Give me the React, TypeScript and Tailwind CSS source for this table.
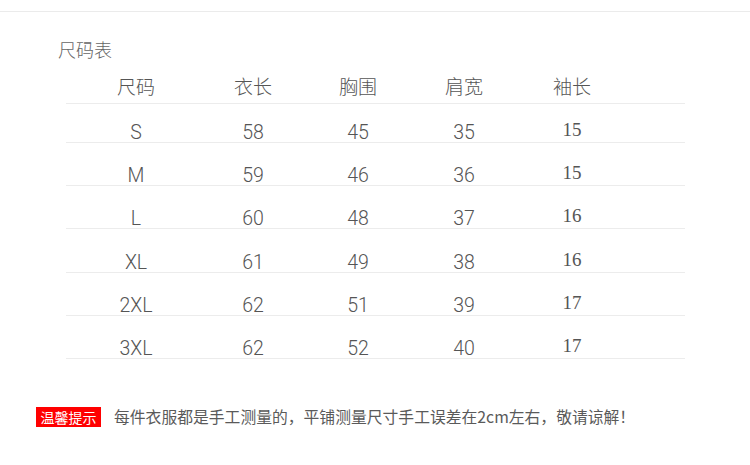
const cjk = "font-['Noto_Sans_CJK_SC',sans-serif]";
const num = "font-['Roboto','Liberation_Sans','Noto_Sans_CJK_SC',sans-serif] font-light";
const serif = "font-['Liberation_Serif',serif]";

const cols = "grid grid-cols-[140px_94px_116px_96px_120px_1fr]";

const headers = ["尺码", "衣长", "胸围", "肩宽", "袖长"];

const rows = [
  ["S", "58", "45", "35", "15"],
  ["M", "59", "46", "36", "15"],
  ["L", "60", "48", "37", "16"],
  ["XL", "61", "49", "38", "16"],
  ["2XL", "62", "51", "39", "17"],
  ["3XL", "62", "52", "40", "17"],
];

export default function App() {
  return (
    <div className="w-[750px] h-[465px] bg-white overflow-hidden">
      <div className="mt-[11px] border-t border-[#ebebeb]" />

      <div className={`ml-[58px] mt-[28px] text-[18px] leading-[18px] text-[#666] font-light ${cjk}`}>
        尺码表
      </div>

      <div className="ml-[66px] w-[619px]">
        <div className={`${cols} h-[46px] items-end pb-[8px] border-b border-[#ececec]`}>
          {headers.map((h) => (
            <div key={h} className={`text-center text-[19px] leading-[19px] text-[#555] font-light ${cjk}`}>
              {h}
            </div>
          ))}
        </div>

        {rows.map((r, i) => (
          <div
            key={r[0]}
            className={`${cols} ${i === 0 ? "h-[39px]" : "h-[43.2px]"} items-end border-b border-[#ececec]`}
          >
            {r.map((v, j) => (
              <div
                key={j}
                className={
                  j === 4
                    ? `text-center text-[19px] leading-[19px] pb-[3px] text-[#555] ${serif}`
                    : `text-center text-[19.5px] leading-[19px] text-[#555] ${num}`
                }
              >
                {v}
              </div>
            ))}
          </div>
        ))}
      </div>

      <div className="mt-[48px] ml-[36px] flex items-center">
        <span className={`w-[65px] h-[20px] bg-[#ff0000] text-white text-[14px] leading-[20px] text-center ${cjk}`}>
          温馨提示
        </span>
        <span className={`ml-[13px] text-[15.8px] leading-[20px] text-[#5a5a5a] ${cjk}`}>
          每件衣服都是手工测量的，平铺测量尺寸手工误差在2cm左右，敬请谅解！
        </span>
      </div>
    </div>
  );
}
